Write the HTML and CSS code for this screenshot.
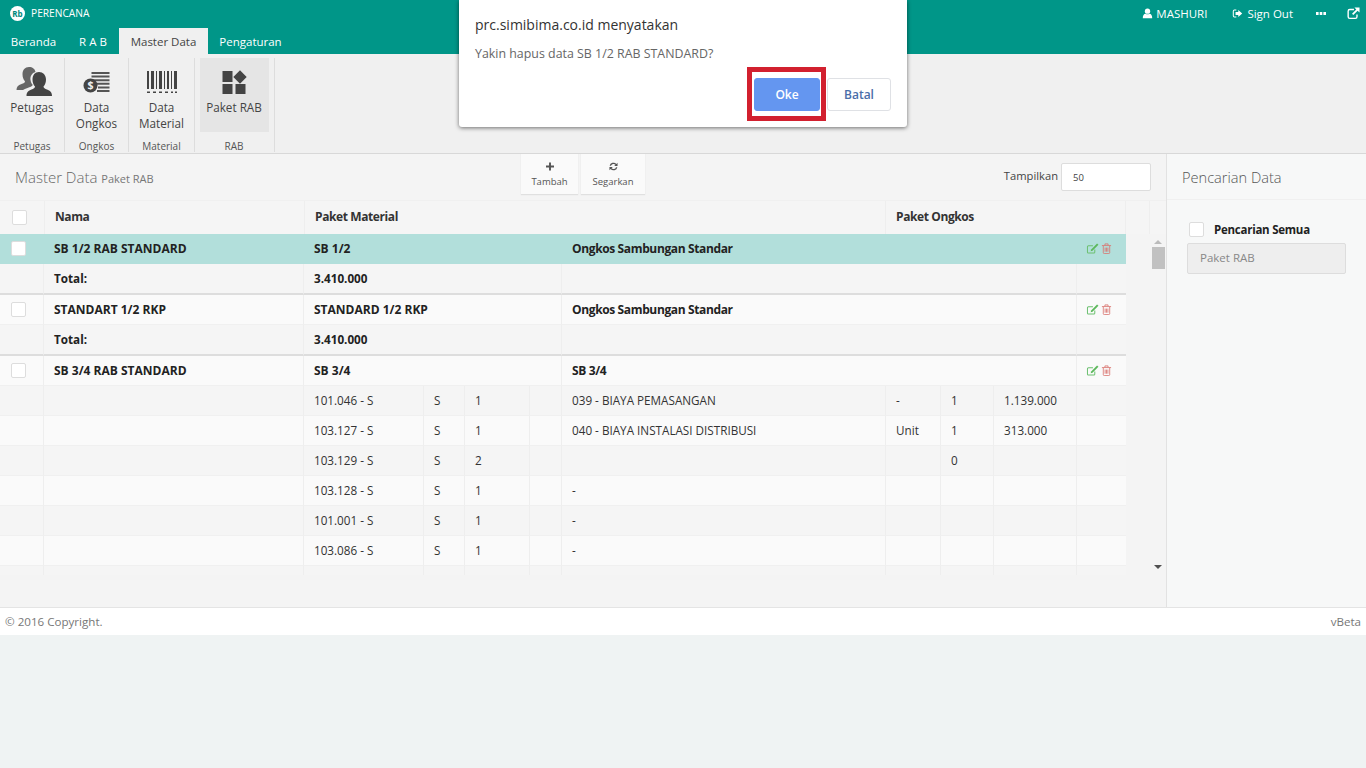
FILE: index.html
```html
<!DOCTYPE html>
<html lang="id">
<head>
  <meta charset="UTF-8">
  <title>Perencana - Paket RAB</title>
  <link rel="stylesheet" href="styles.css">
</head>
<body>
  <header class="topbar">
    <div class="topbar-row">
      <div class="brand"><span class="brand-logo">Rb</span>PERENCANA</div>
      <nav class="user-menu">
        <span class="user-item"><svg class="ico" viewBox="0 0 14 14"><circle cx="7" cy="4" r="3.4"/><path d="M1 13c0-4 1.5-5.6 3.4-5.8 1.6 1 3.6 1 5.2 0C11.500 7.400 13 9 13 13z"/></svg>MASHURI</span>
        <span class="user-item signout"><svg class="ico" viewBox="0 0 14 14"><path d="M5.500 2H3a2 2 0 0 0-2 2v6a2 2 0 0 0 2 2h2.500v-1.300H3a.7.7 0 0 1-.7-.7V4a.7.7 0 0 1 .7-.7h2.500z"/><path d="M8 2.500 13 7l-5 4.500V9H4.500V5H8z"/></svg>Sign Out</span>
        <span class="user-item dots"><svg class="ico" viewBox="0 0 10 3"><path d="M0 0h2.600v3H0zM3.700 0h2.600v3H3.700zM7.400 0H10v3H7.400z"/></svg></span>
        <span class="user-item popout"><svg class="ico" viewBox="0 0 14 14"><path d="M10 8v2.500a1 1 0 0 1-1 1H3a1 1 0 0 1-1-1v-6a1 1 0 0 1 1-1h4.500V2H3a2.500 2.500 0 0 0-2.500 2.500v6A2.500 2.500 0 0 0 3 13h6a2.500 2.500 0 0 0 2.500-2.500V8z"/><path d="M8 .5h5.500V6L11.400 4 6.800 8.600 5.400 7.200 10 2.600z"/></svg></span>
      </nav>
    </div>
    <nav class="tabs">
      <a class="tab">Beranda</a>
      <a class="tab">R A B</a>
      <a class="tab active">Master Data</a>
      <a class="tab">Pengaturan</a>
    </nav>
  </header>

  <section class="ribbon">
    <div class="ribbon-group group-petugas">
      <div class="ribbon-btn">
        <svg class="ribbon-ico" viewBox="0 0 36 32"><path fill="#666" d="M13 1c3.500 0 6 2 6.500 5-3.500 1-5.500 4-5 8 .3 2 1.200 4 2.300 5-1 1.500-2.600 2-5.300 3-2 .7-3.500 1.300-4.500 2H.5c0-3 1.500-5 5-6 2-.6 3.500-1.300 3.500-2.800-1.500-1.500-2.500-4-2.500-7C6.500 4 9 1 13 1z"/><path fill="#444" d="M23 6c4 0 7 3 7 7.500 0 3-1 5.500-2.500 7 0 1.700 1.500 2.300 3.500 3 3 1 5 2.500 5 6.500H10.500c0-4 2-5.500 5-6.500 2-.7 3.500-1.300 3.500-3-1.500-1.500-2.500-4-2.500-7C16.500 9 19 6 23 6z"/></svg>
        <span>Petugas</span>
      </div>
      <div class="group-label">Petugas</div>
    </div>
    <div class="ribbon-group group-ongkos">
      <div class="ribbon-btn">
        <svg class="ribbon-ico" viewBox="0 0 36 32"><path fill="#555" d="M12.500 6h18v2h-18zM12.500 9.600h18v2h-18zM12.500 13.200h18v2h-18zM18 16.800h12.500v2H18zM19 20.400h11.500v2H19zM18 24h12.500v2H18z"/><circle cx="11.500" cy="19.500" r="7" fill="#444"/><text x="11.500" y="23.300" class="dollar">$</text></svg>
        <span>Data<br>Ongkos</span>
      </div>
      <div class="group-label">Ongkos</div>
    </div>
    <div class="ribbon-group group-material">
      <div class="ribbon-btn">
        <svg class="ribbon-ico" viewBox="0 0 36 32"><path fill="#444" d="M3 5h2v18H3zM7 5h3v18H7zM12 5h1v18h-1zM15 5h3v18h-3zM20 5h1v18h-1zM23 5h2v18h-2zM27 5h1v18h-1zM30 5h3v18h-3zM3 25.500h3v1.500H3zM9 25.500h3v1.500H9zM15 25.500h3v1.500h-3zM21 25.500h3v1.500h-3zM27 25.500h2v1.500h-2zM31 25.500h2v1.500h-2z"/></svg>
        <span>Data<br>Material</span>
      </div>
      <div class="group-label">Material</div>
    </div>
    <div class="ribbon-group group-rab">
      <div class="ribbon-btn current">
        <svg class="ribbon-ico" viewBox="0 0 36 32"><path fill="#444" d="M6.500 5h10v11h-10zM6.500 18h10v10h-10zM19.500 18h10v10h-10zM24 4.300l6.700 6.700-6.700 6.700-6.700-6.700z"/></svg>
        <span>Paket RAB</span>
      </div>
      <div class="group-label">RAB</div>
    </div>
  </section>

  <main class="workspace">
    <section class="content">
      <div class="content-head">
        <h1 class="page-title">Master Data <small>Paket RAB</small></h1>
        <div class="tools">
          <button class="tool-btn tool-add"><svg class="tool-ico" viewBox="0 0 10 10"><path d="M3.800 0h2.400v3.800H10v2.400H6.200V10H3.800V6.200H0V3.800h3.800z"/></svg>Tambah</button>
          <button class="tool-btn tool-refresh"><svg class="tool-ico" viewBox="0 0 10 10"><path d="M.7 4.300a4.400 4.400 0 0 1 7.500-2.200L9.500.8v3.700H5.800l1.400-1.400a3 3 0 0 0-5 1.200zM9.300 5.700a4.400 4.400 0 0 1-7.500 2.200L.5 9.200V5.500h3.700L2.800 6.900a3 3 0 0 0 5-1.200z"/></svg>Segarkan</button>
        </div>
        <label class="page-size">Tampilkan <span class="size-input">50</span></label>
      </div>

      <div class="grid-head">
        <div class="head-cell head-check"><span class="check"></span></div>
        <div class="head-cell head-name">Nama</div>
        <div class="head-cell head-material">Paket Material</div>
        <div class="head-cell head-ongkos">Paket Ongkos</div>
        <div class="head-cell head-scroll"></div>
      </div>

      <div class="grid-body">
        <div class="grid-clip">
          <table class="grid">
            <colgroup>
              <col class="c-check"><col class="c-name"><col class="c-code"><col class="c-unit"><col class="c-qty"><col class="c-x"><col class="c-item"><col class="c-iunit"><col class="c-iqty"><col class="c-price"><col class="c-act">
            </colgroup>
            <tbody id="rows"></tbody>
          </table>
        </div>
        <div class="scrollbar">
          <span class="arrow up"></span>
          <span class="thumb"></span>
          <span class="arrow down"></span>
        </div>
      </div>
    </section>

    <aside class="search-panel">
      <h2 class="search-title">Pencarian Data</h2>
      <div class="search-body">
        <div class="search-all"><span class="check"></span><b>Pencarian Semua</b></div>
        <div class="search-input">Paket RAB</div>
      </div>
    </aside>
  </main>

  <footer class="footer">
    <span>© 2016 Copyright.</span>
    <span>vBeta</span>
  </footer>

  <div class="dialog">
    <div class="dialog-title">prc.simibima.co.id menyatakan</div>
    <div class="dialog-text">Yakin hapus data SB 1/2 RAB STANDARD?</div>
    <div class="dialog-actions">
      <span class="mark"><button class="btn-ok">Oke</button></span>
      <button class="btn-cancel">Batal</button>
    </div>
  </div>

  <script>
    const actions = '<svg class="act" viewBox="0 0 14 12"><path fill="none" stroke="#6cc070" stroke-width="1.100" d="M9.500 7v3a1 1 0 0 1-1 1h-6a1 1 0 0 1-1-1V4a1 1 0 0 1 1-1h5"/><path fill="#5cb85c" d="M12 .5 13.500 2 7 8.500 5 9l.5-2z"/></svg>' +
      '<svg class="act" viewBox="0 0 11 12"><path fill="none" stroke="#d9736f" stroke-width=".9" d="M2 3v7.500a1 1 0 0 0 1 1h5a1 1 0 0 0 1-1V3M.5 2.800h10M3.800 2.500V1h3.400v1.500M4 5v4.500M5.500 5v4.500M7 5v4.500"/></svg>';

    const head = (name, mat, ongkos, cls) =>
      `<tr class="row-head ${cls}"><td><span class="check"></span></td><td>${name}</td><td colspan="4">${mat}</td><td colspan="4" class="mixed">${ongkos}</td><td class="cell-act">${actions}</td></tr>`;
    const total = () =>
      `<tr class="row-total"><td></td><td>Total:</td><td colspan="4">3.410.000</td><td colspan="4"></td><td></td></tr>`;
    const item = (r, i) =>
      `<tr class="row-item ${i % 2 ? 'light' : ''}"><td></td><td></td><td>${r[0]}</td><td>${r[0] ? 'S' : ''}</td><td>${r[1]}</td><td></td><td>${r[2] ?? ''}</td><td>${r[3] ?? ''}</td><td>${r[4] ?? ''}</td><td>${r[5] ?? ''}</td><td></td></tr>`;

    const items = [
      ['101.046 - S', 1, '039 - BIAYA PEMASANGAN', '-', 1, '1.139.000'],
      ['103.127 - S', 1, '040 - BIAYA INSTALASI DISTRIBUSI', 'Unit', 1, '313.000'],
      ['103.129 - S', 2, '', '', 0, ''],
      ['103.128 - S', 1, '-'],
      ['101.001 - S', 1, '-'],
      ['103.086 - S', 1, '-'],
      ['', '', '']
    ];

    document.getElementById('rows').innerHTML =
      head('SB 1/2 RAB STANDARD', 'SB 1/2', 'Ongkos Sambungan Standar', 'selected') + total() +
      head('STANDART 1/2 RKP', 'STANDARD 1/2 RKP', 'Ongkos Sambungan Standar', '') + total() +
      head('SB 3/4 RAB STANDARD', 'SB 3/4', 'SB 3/4', '') +
      items.map(item).join('');
  </script>
</body>
</html>
```

FILE: styles.css
```css
* {
  box-sizing: border-box;
}

html,
body {
  height: 100%;
}

body {
  margin: 0;
  background: #eff3f3;
  color: #222;
  font-family: "Open Sans", "Noto Sans", sans-serif;
  font-size: 12px;
  overflow: hidden;
  position: relative;
}

/* top bar */
.topbar {
  height: 54px;
  background: #009688;
  color: #fff;
}

.topbar-row {
  height: 28px;
  padding-bottom: 2px;
  display: flex;
  justify-content: space-between;
  align-items: center;
}

.brand {
  display: flex;
  align-items: center;
  padding-left: 10px;
  font-size: 10.200px;
}

.brand-logo {
  width: 15px;
  height: 15px;
  margin-right: 6px;
  border-radius: 50%;
  background: #fff;
  color: #00897b;
  font-size: 8px;
  font-weight: 700;
  line-height: 15px;
  text-align: center;
}

.user-menu {
  display: flex;
  align-items: center;
  padding-right: 6px;
}

.user-item {
  display: flex;
  align-items: center;
  font-size: 11.500px;
}

.ico {
  width: 11px;
  height: 11px;
  margin-right: 3px;
  fill: #fff;
}

.signout {
  margin-left: 25px;
}

.signout .ico {
  margin-right: 4px;
}

.dots {
  margin-left: 23px;
}

.dots .ico {
  width: 10px;
  height: 3px;
  margin: 0;
}

.popout {
  margin-left: 21px;
}

.popout .ico {
  width: 13px;
  height: 13px;
  margin: 0;
}

.tabs {
  height: 26px;
  display: grid;
  grid-template-columns: 67px 52px 89px 85px;
}

.tab {
  font-size: 11.500px;
  line-height: 27px;
  text-align: center;
  color: #fff;
}

.tab.active {
  background: #f0f0f0;
  color: #444;
}

/* ribbon */
.ribbon {
  height: 100px;
  display: flex;
  background: #f0f0f0;
  border-bottom: 1px solid #d8d8d8;
}

.ribbon-group {
  height: 94px;
  margin-top: 4px;
  display: flex;
  flex-direction: column;
  align-items: center;
  border-right: 1px solid #ddd;
}

.group-petugas {
  width: 65px;
}

.group-ongkos {
  width: 64px;
}

.group-material {
  width: 66px;
}

.group-rab {
  width: 80px;
  padding-right: 1px;
}

.ribbon-btn {
  flex: 1;
  width: 69px;
  padding-top: 8px;
  display: flex;
  flex-direction: column;
  align-items: center;
  text-align: center;
  font-size: 11.700px;
  line-height: 16px;
  color: #444;
}

.group-petugas .ribbon-btn,
.group-ongkos .ribbon-btn,
.group-material .ribbon-btn {
  width: 100%;
}

.ribbon-btn.current {
  background: #e5e5e5;
  margin-bottom: 1px;
}

.ribbon-ico {
  width: 36px;
  height: 32px;
  margin-bottom: 1px;
}

.group-petugas .ribbon-ico {
  margin-left: 4px;
}

.dollar {
  fill: #f0f0f0;
  font-size: 10.500px;
  font-weight: 700;
  text-anchor: middle;
}

.group-label {
  height: 19px;
  padding-top: 6px;
  font-size: 10px;
  line-height: 14px;
  color: #555;
}

/* main area */
.workspace {
  height: 453px;
  display: flex;
  background: #f4f4f4;
}

.content {
  width: 1167px;
  border-right: 1px solid #e2e2e2;
}

.content-head {
  height: 46px;
  display: flex;
  position: relative;
}

.page-title {
  width: 521px;
  margin: 0;
  padding: 13px 0 0 15px;
  font-size: 15px;
  font-weight: 300;
  line-height: 20px;
  color: #666;
}

.page-title small {
  font-size: 11px;
  font-weight: 400;
  color: #777;
}

.tools {
  display: flex;
  gap: 3px;
  height: 41px;
}

.tool-btn {
  display: flex;
  flex-direction: column;
  align-items: center;
  padding: 8px 0 0;
  background: #fafafa;
  border: 0;
  border-bottom: 1px solid #e0e0e0;
  box-shadow: 0 0 1px #ddd;
  font-family: inherit;
  font-size: 9.500px;
  color: #555;
}

.tool-add {
  width: 57px;
}

.tool-refresh {
  width: 64px;
}

.tool-ico {
  width: 8px;
  height: 9px;
  margin-bottom: 4px;
  fill: #555;
}

.tool-refresh .tool-ico {
  width: 9px;
}

.page-size {
  margin-left: auto;
  margin-right: 15px;
  margin-top: 9px;
  display: flex;
  align-items: flex-start;
  gap: 3px;
  font-size: 11.200px;
  line-height: 26px;
  color: #444;
}

.size-input {
  width: 90px;
  height: 28px;
  padding-left: 11px;
  background: #fff;
  border: 1px solid #ddd;
  border-radius: 2px;
  font-size: 9.500px;
  line-height: 27px;
}

.grid-head {
  height: 34px;
  display: flex;
  background: #f5f5f5;
  font-size: 12px;
  font-weight: 700;
  letter-spacing: -.4px;
  color: #333;
  border-top: 1px solid #f0f0f0;
}

.head-cell {
  padding-left: 10px;
  line-height: 32px;
  border-right: 1px solid #eee;
}

.head-check {
  width: 45px;
  padding: 9px 0 0 12px;
}

.head-name {
  width: 260px;
}

.head-material {
  width: 581px;
}

.head-ongkos {
  width: 240px;
}

.head-scroll {
  width: 24px;
}

.check {
  display: block;
  width: 15px;
  height: 15px;
  background: #fff;
  border: 1px solid #ddd;
  border-radius: 2px;
}

.grid-body {
  height: 341px;
  display: flex;
}

.grid-clip {
  width: 1126px;
  overflow: hidden;
}

.grid {
  width: 1126px;
  table-layout: fixed;
  border-collapse: separate;
  border-spacing: 0;
}

.c-check { width: 44px; }
.c-name { width: 260px; }
.c-code { width: 120px; }
.c-unit { width: 41px; }
.c-qty { width: 65px; }
.c-x { width: 32px; }
.c-item { width: 324px; }
.c-iunit { width: 55px; }
.c-iqty { width: 53px; }
.c-price { width: 83px; }
.c-act { width: 49px; }

.grid td {
  height: 30px;
  padding: 0 10px 2px;
  border-right: 1px solid #eee;
  border-bottom: 1px solid #f0f0f0;
  font-size: 11.700px;
  white-space: nowrap;
  overflow: hidden;
  color: #333;
}

.grid td:first-child {
  padding: 0 0 0 11px;
}

.grid td:last-child {
  border-right: 0;
}

.row-head td,
.row-total td {
  font-weight: 700;
  color: #222;
}

.grid .row-head td {
  padding-bottom: 0;
  font-size: 12px;
  background: #fafafa;
}

.grid .row-head td.mixed {
  letter-spacing: -.37px;
}

.row-total td {
  background: #f5f5f5;
}

.grid .row-total td {
  height: 31px;
  border-bottom: 2px solid #ddd;
  font-size: 11.700px;
}

.grid .row-head.selected td {
  background: #b2dfdb;
  border-right-color: #b2dfdb;
  border-bottom-color: #b2dfdb;
}

.row-item td {
  background: #f5f5f5;
}

.row-item.light td {
  background: #fafafa;
}

.cell-act {
  text-align: right;
}

.grid .row-head .cell-act {
  padding: 0 13px 0 0;
  line-height: 0;
}

.act {
  height: 11px;
  width: 13px;
  margin-left: 1px;
  vertical-align: top;
}

.scrollbar {
  width: 40px;
  padding-left: 24px;
  display: flex;
  flex-direction: column;
  align-items: center;
  position: relative;
}

.thumb {
  width: 13px;
  height: 22px;
  margin-top: 3px;
  background: #c1c1c1;
}

.arrow {
  width: 0;
  height: 0;
  border-left: 4px solid transparent;
  border-right: 4px solid transparent;
}

.arrow.up {
  margin-top: 6px;
  border-bottom: 4px solid #bbb;
}

.arrow.down {
  margin-top: auto;
  margin-bottom: 6px;
  border-top: 4px solid #505050;
}

/* side panel */
.search-panel {
  flex: 1;
  background: #f7f8f8;
}

.search-title {
  height: 46px;
  margin: 0;
  padding: 13px 0 0 15px;
  border-bottom: 1px solid #f0f0f0;
  font-size: 14.600px;
  font-weight: 300;
  line-height: 20px;
  color: #555;
}

.search-body {
  padding: 22px 20px 0;
}

.search-all {
  display: flex;
  align-items: center;
  gap: 10px;
  padding-left: 2px;
  font-size: 11.500px;
  letter-spacing: -.25px;
  color: #222;
}

.search-input {
  height: 31px;
  margin-top: 6px;
  padding-left: 12px;
  background: #eee;
  border: 1px solid #ddd;
  border-radius: 2px;
  font-size: 11.500px;
  line-height: 28px;
  color: #888;
}

.footer {
  height: 28px;
  padding: 0 5px;
  display: flex;
  justify-content: space-between;
  align-items: center;
  background: #fff;
  font-size: 11.600px;
  color: #777;
  border-top: 1px solid #e4e4e4;
}

/* browser confirm box */
.dialog {
  position: absolute;
  left: 459px;
  top: 0;
  width: 448px;
  height: 127px;
  padding: 15px 16px 0;
  background: #fff;
  border-radius: 0 0 3px 3px;
  box-shadow: 0 1px 4px rgba(0, 0, 0, .55);
}

.dialog-title {
  font-size: 14px;
  line-height: 20px;
  color: #333;
}

.dialog-text {
  margin-top: 10px;
  font-size: 12.400px;
  line-height: 18px;
  color: #666;
}

.dialog-actions {
  position: absolute;
  right: 16px;
  top: 67px;
  display: flex;
  align-items: center;
  gap: 1px;
}

.mark {
  display: block;
  width: 79px;
  height: 54px;
  padding: 6px 0 0 2px;
  border: 5px solid #d2202f;
  background: #fff;
}

.btn-ok,
.btn-cancel {
  height: 33px;
  border-radius: 3px;
  font-family: inherit;
  font-size: 12px;
  font-weight: 600;
}

.btn-ok {
  width: 66px;
  background: #6496f0;
  border: 1px solid #6496f0;
  color: #fff;
}

.btn-cancel {
  width: 64px;
  margin-top: 1px;
  background: #fff;
  border: 1px solid #dfe1e5;
  color: #4a6ea9;
}
```
